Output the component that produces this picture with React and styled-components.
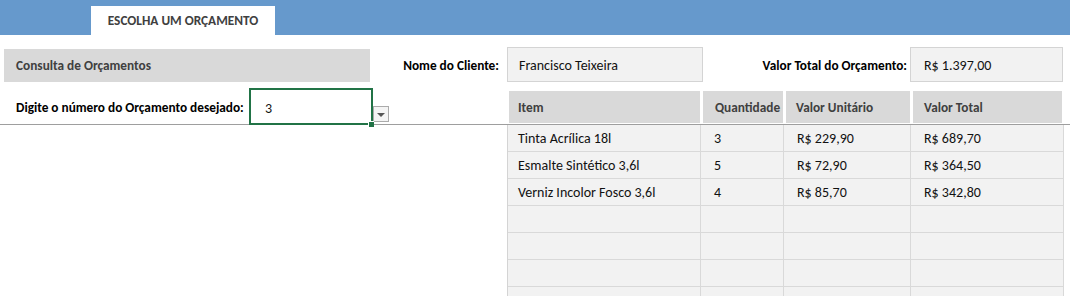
import React from "react";
import styled, { createGlobalStyle } from "styled-components";

const GlobalStyle = createGlobalStyle`
  html, body { margin: 0; padding: 0; background: #ffffff; }
  body {
    font-family: Carlito, Calibri, Lato, "Liberation Sans", sans-serif;
    font-size: 14px;
    color: #000;
    overflow: hidden;
  }
`;

const Sheet = styled.div`
  width: 1070px;
  height: 296px;
  background: #fff;
  overflow: hidden;
`;

const Ribbon = styled.div`
  height: 35px;
  background: #6699cc;
  display: flex;
  align-items: flex-end;
  padding-left: 91px;
  box-sizing: border-box;
`;

const Tab = styled.div`
  width: 184px;
  height: 29px;
  background: #fff;
  display: flex;
  align-items: center;
  justify-content: center;
  font-weight: bold;
  font-size: 13.3px;
  color: #404040;
  padding-bottom: 1px;
  box-sizing: border-box;
`;

const FrozenPane = styled.div`
  display: grid;
  grid-template-columns: 507px 556px;
  grid-template-rows: 35px 36px;
  row-gap: 6px;
  padding-top: 12px;
  height: 90px;
  box-sizing: border-box;
  border-bottom: 1px solid #9e9e9e;
`;

const Line = styled.div`
  display: flex;
  align-items: ${(p) => p.$align || "center"};
  min-width: 0;
`;

const SectionTitle = styled.div`
  width: 366px;
  height: 33px;
  margin: 2px 0 0 4px;
  background: #d9d9d9;
  display: flex;
  align-items: center;
  padding-left: 12px;
  box-sizing: border-box;
  font-weight: bold;
  font-size: 13.3px;
  color: #404040;
`;

const FieldLabel = styled.div`
  flex: 1;
  align-self: center;
  text-align: right;
  padding-right: ${(p) => p.$gap}px;
  font-weight: bold;
  font-size: 13.3px;
  color: #000;
  white-space: nowrap;
  padding-top: 1px;
`;

const ValueBox = styled.div`
  width: ${(p) => p.$w}px;
  height: 35px;
  background: #f2f2f2;
  border: 1px solid #d4d4d4;
  box-sizing: border-box;
  display: flex;
  align-items: center;
  padding-left: ${(p) => p.$pad}px;
  padding-top: 1px;
  font-size: 14px;
  color: #111;
  white-space: nowrap;
`;

const PromptLabel = styled.div`
  width: 249px;
  padding-left: 16px;
  box-sizing: border-box;
  font-weight: bold;
  font-size: 13.3px;
  color: #000;
  white-space: nowrap;
  align-self: center;
  padding-top: 2px;
`;

const SelectedCell = styled.div`
  position: relative;
  width: 124px;
  height: 37px;
  border: 2px solid #217346;
  box-sizing: border-box;
  background: #fff;
  display: flex;
  align-items: center;
  padding-left: 14px;
  padding-top: 3px;
  font-size: 14px;
  color: #111;
  align-self: flex-start;
`;

const FillHandle = styled.span`
  position: absolute;
  right: -3px;
  bottom: -4px;
  width: 5px;
  height: 5px;
  background: #217346;
  border: 1px solid #fff;
  border-right: none;
  border-bottom: none;
`;

const DropButton = styled.div`
  width: 16px;
  height: 16px;
  margin-top: 18px;
  align-self: flex-start;
  background: #f4f4f4;
  border: 1px solid #ababab;
  box-sizing: border-box;
  display: flex;
  align-items: center;
  justify-content: center;
`;

const Arrow = styled.span`
  width: 0;
  height: 0;
  margin-top: 1px;
  border-left: 4px solid transparent;
  border-right: 4px solid transparent;
  border-top: 4px solid #555;
`;

const HeaderRow = styled.div`
  display: grid;
  grid-template-columns: 194px 83px 127px 152px;
  height: 32px;
  margin-top: 3px;
  align-self: flex-start;
`;

const HeadCell = styled.div`
  margin: 0 1px 0 2px;
  background: #d9d9d9;
  display: flex;
  align-items: center;
  padding-left: ${(p) => p.$pad}px;
  padding-top: 1px;
  font-weight: bold;
  font-size: 13.3px;
  color: #404040;
  white-space: nowrap;
`;

const BodyPane = styled.div`
  padding-left: 507px;
`;

const Table = styled.div`
  width: 557px;
  border-left: 1px solid #d4d4d4;
  box-sizing: border-box;
`;

const BodyRow = styled.div`
  display: grid;
  grid-template-columns: 193px 83px 127px 153px;
  height: 27px;
  background: #f2f2f2;
  border-bottom: 1px solid #d9d9d9;
  box-sizing: border-box;
`;

const Cell = styled.div`
  display: flex;
  align-items: center;
  padding-left: ${(p) => p.$pad}px;
  padding-top: 1px;
  border-right: 1px solid #d9d9d9;
  font-size: 14px;
  color: #111;
  white-space: nowrap;
`;

const columns = [
  { title: "Item", pad: 9, body: 10 },
  { title: "Quantidade", pad: 12, body: 13 },
  { title: "Valor Unitário", pad: 10, body: 13 },
  { title: "Valor Total", pad: 11, body: 13 },
];

const items = [
  ["Tinta Acrílica 18l", "3", "R$ 229,90", "R$ 689,70"],
  ["Esmalte Sintético 3,6l", "5", "R$ 72,90", "R$ 364,50"],
  ["Verniz Incolor Fosco 3,6l", "4", "R$ 85,70", "R$ 342,80"],
  ["", "", "", ""],
  ["", "", "", ""],
  ["", "", "", ""],
  ["", "", "", ""],
];

export default function App() {
  return (
    <>
      <GlobalStyle />
      <Sheet>
        <Ribbon>
          <Tab>ESCOLHA UM ORÇAMENTO</Tab>
        </Ribbon>
        <FrozenPane>
          <Line $align="flex-start">
            <SectionTitle>Consulta de Orçamentos</SectionTitle>
            <FieldLabel $gap={8}>Nome do Cliente:</FieldLabel>
          </Line>
          <Line>
            <ValueBox $w={196} $pad={11}>Francisco Teixeira</ValueBox>
            <FieldLabel $gap={3}>Valor Total do Orçamento:</FieldLabel>
            <ValueBox $w={153} $pad={13}>R$ 1.397,00</ValueBox>
          </Line>
          <Line $align="flex-start">
            <PromptLabel>Digite o número do Orçamento desejado:</PromptLabel>
            <SelectedCell>
              3
              <FillHandle />
            </SelectedCell>
            <DropButton>
              <Arrow />
            </DropButton>
          </Line>
          <Line $align="flex-start">
            <HeaderRow>
              {columns.map((c) => (
                <HeadCell key={c.title} $pad={c.pad}>
                  {c.title}
                </HeadCell>
              ))}
            </HeaderRow>
          </Line>
        </FrozenPane>
        <BodyPane>
          <Table>
            {items.map((row, i) => (
              <BodyRow key={i}>
                {row.map((v, j) => (
                  <Cell key={j} $pad={columns[j].body}>
                    {v}
                  </Cell>
                ))}
              </BodyRow>
            ))}
          </Table>
        </BodyPane>
      </Sheet>
    </>
  );
}
